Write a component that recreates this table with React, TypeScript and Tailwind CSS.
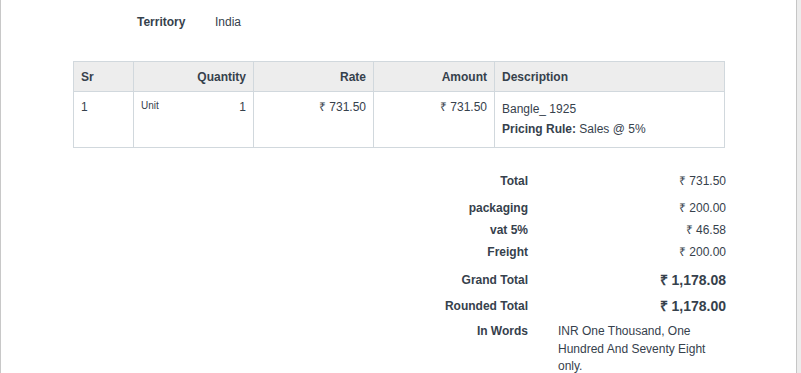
import React from 'react';

type Line = { label: string; value: string; strong?: boolean; gap?: string };

const totals: Line[] = [
  { label: 'Total', value: '₹ 731.50', gap: 'mt-[22px]' },
  { label: 'packaging', value: '₹ 200.00', gap: 'mt-[5px]' },
  { label: 'vat 5%', value: '₹ 46.58' },
  { label: 'Freight', value: '₹ 200.00' },
  { label: 'Grand Total', value: '₹ 1,178.08', strong: true, gap: 'mt-[6px]' },
  { label: 'Rounded Total', value: '₹ 1,178.00', strong: true, gap: 'mt-[4px]' },
];

const cell = 'border border-[#d1d8dd] px-[7px]';

export default function App() {
  return (
    <div
      className="w-[801px] h-[373px] bg-white flex text-[12px] text-[#36414c] overflow-hidden"
      style={{ fontFamily: '"Liberation Sans", Arial, sans-serif' }}
    >
      <div className="w-[797px] h-full border-l border-[#c8c8c8] border-r border-r-[#c6c6c6]">
        {/* header field */}
        <div className="flex pt-[14px] h-[31px] leading-[16px]">
          <div className="ml-[136px] w-[78px] font-bold">Territory</div>
          <div>India</div>
        </div>

        {/* item table */}
        <table className="ml-[72px] mt-[30px] border-collapse table-fixed w-[652px]">
          <colgroup>
            <col className="w-[60px]" />
            <col className="w-[120px]" />
            <col className="w-[120px]" />
            <col className="w-[121px]" />
            <col />
          </colgroup>
          <thead>
            <tr className="bg-[#ededed] h-[30px] font-bold">
              <th className={`${cell} text-left font-bold`}>Sr</th>
              <th className={`${cell} text-right font-bold`}>Quantity</th>
              <th className={`${cell} text-right font-bold`}>Rate</th>
              <th className={`${cell} text-right font-bold`}>Amount</th>
              <th className={`${cell} text-left font-bold`}>Description</th>
            </tr>
          </thead>
          <tbody>
            <tr className="h-[56px] align-top">
              <td className={`${cell} pt-[6px]`}>1</td>
              <td className={`${cell} pt-[6px]`}>
                <div className="flex justify-between">
                  <span className="text-[10px] leading-[16px] text-[#36414c]">Unit</span>
                  <span>1</span>
                </div>
              </td>
              <td className={`${cell} pt-[6px] text-right`}>₹ 731.50</td>
              <td className={`${cell} pt-[6px] text-right`}>₹ 731.50</td>
              <td className={`${cell} pt-[7px] leading-[20px]`}>
                <div>Bangle_ 1925</div>
                <div>
                  <span className="font-bold">Pricing Rule:</span> Sales @ 5%
                </div>
              </td>
            </tr>
          </tbody>
        </table>

        {/* totals */}
        <div className="ml-[72px] w-[653px]">
          {totals.map((t) => (
            <div
              key={t.label}
              className={`grid grid-cols-[1fr_168px] gap-[30px] h-[22px] items-center ${t.gap ?? ''}`}
            >
              <div className="text-right font-bold">{t.label}</div>
              <div className={`text-right ${t.strong ? 'font-bold text-[14px]' : ''}`}>{t.value}</div>
            </div>
          ))}
          <div className="grid grid-cols-[1fr_168px] gap-[30px] mt-[6px] leading-[17.5px]">
            <div className="text-right font-bold">In Words</div>
            <div className="pr-[10px]">INR One Thousand, One Hundred And Seventy Eight only.</div>
          </div>
        </div>
      </div>
      <div className="flex-1 bg-[#ececec]" />
    </div>
  );
}
